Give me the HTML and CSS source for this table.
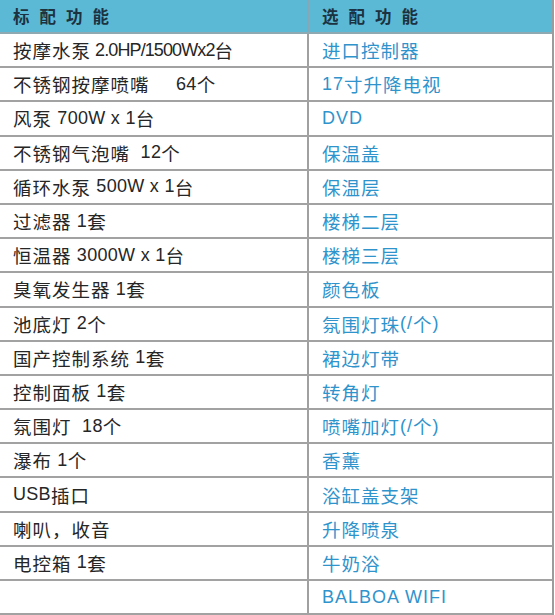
FILE: index.html
```html
<!DOCTYPE html>
<html lang="zh-CN">
<head>
<meta charset="utf-8">
<title>配置表</title>
<link rel="stylesheet" href="styles.css">
</head>
<body>
<div class="table">
  <div class="row head">
    <div class="cell left">标配功能</div>
    <div class="cell right">选配功能</div>
  </div>
  <div class="row"><div class="cell left">按摩水泵<span class="lat tight"> 2.0HP/1500Wx2</span>台</div><div class="cell right">进口控制器</div></div>
  <div class="row"><div class="cell left">不锈钢按摩喷嘴<span class="lat">&nbsp;&nbsp;&nbsp;&nbsp; 64</span>个</div><div class="cell right"><span class="lat">17</span>寸升降电视</div></div>
  <div class="row"><div class="cell left">风泵<span class="lat"> 700W x 1</span>台</div><div class="cell right"><span class="lat">DVD</span></div></div>
  <div class="row"><div class="cell left">不锈钢气泡嘴<span class="lat">&nbsp; 12</span>个</div><div class="cell right">保温盖</div></div>
  <div class="row"><div class="cell left">循环水泵<span class="lat"> 500W x 1</span>台</div><div class="cell right">保温层</div></div>
  <div class="row"><div class="cell left">过滤器<span class="lat"> 1</span>套</div><div class="cell right">楼梯二层</div></div>
  <div class="row"><div class="cell left">恒温器<span class="lat"> 3000W x 1</span>台</div><div class="cell right">楼梯三层</div></div>
  <div class="row"><div class="cell left">臭氧发生器<span class="lat"> 1</span>套</div><div class="cell right">颜色板</div></div>
  <div class="row"><div class="cell left">池底灯<span class="lat"> 2</span>个</div><div class="cell right">氛围灯珠<span class="lat">(/</span>个<span class="lat">)</span></div></div>
  <div class="row"><div class="cell left">国产控制系统<span class="lat"> 1</span>套</div><div class="cell right">裙边灯带</div></div>
  <div class="row"><div class="cell left">控制面板<span class="lat"> 1</span>套</div><div class="cell right">转角灯</div></div>
  <div class="row"><div class="cell left">氛围灯<span class="lat">&nbsp; 18</span>个</div><div class="cell right">喷嘴加灯<span class="lat">(/</span>个<span class="lat">)</span></div></div>
  <div class="row"><div class="cell left">瀑布<span class="lat"> 1</span>个</div><div class="cell right">香薰</div></div>
  <div class="row"><div class="cell left"><span class="lat">USB</span>插口</div><div class="cell right">浴缸盖支架</div></div>
  <div class="row"><div class="cell left">喇叭，收音</div><div class="cell right">升降喷泉</div></div>
  <div class="row"><div class="cell left">电控箱<span class="lat"> 1</span>套</div><div class="cell right">牛奶浴</div></div>
  <div class="row"><div class="cell left"></div><div class="cell right"><span class="lat">BALBOA WIFI</span></div></div>
</div>
</body>
</html>
```

FILE: styles.css
```css
html, body {
  margin: 0;
  padding: 0;
  background: #ffffff;
}

body {
  font-family: "Liberation Sans", "Noto Sans CJK SC", sans-serif;
}

.table {
  width: 554px;
  border-right: 2px solid #9c9c9c;
  box-sizing: border-box;
}

.row {
  display: grid;
  grid-template-columns: 309px 1fr;
  height: 34.2px;
  box-sizing: border-box;
  border-bottom: 2px solid #a2a2a2;
}

.row.head {
  height: 34px;
  background: #5bb9d6;
  border-bottom: 2px solid #8fa9b3;
}

.cell {
  display: flex;
  align-items: center;
  font-size: 18.5px;
  letter-spacing: 1px;
  white-space: pre;
}

.lat {
  font-size: 18px;
  letter-spacing: 0.3px;
}

.lat.tight {
  letter-spacing: -0.9px;
}

.cell.left {
  padding-left: 13px;
  color: #262626;
  border-right: 2px solid #a0a0a0;
}

.cell.right {
  padding-left: 13px;
  color: #2f93cc;
}

.cell.right .lat {
  letter-spacing: 1px;
}

.head .cell {
  font-size: 16.5px;
  font-weight: bold;
  letter-spacing: 10px;
  color: #1c3240;
}

.head .cell.left {
  border-right-color: #86a7b3;
}
```
